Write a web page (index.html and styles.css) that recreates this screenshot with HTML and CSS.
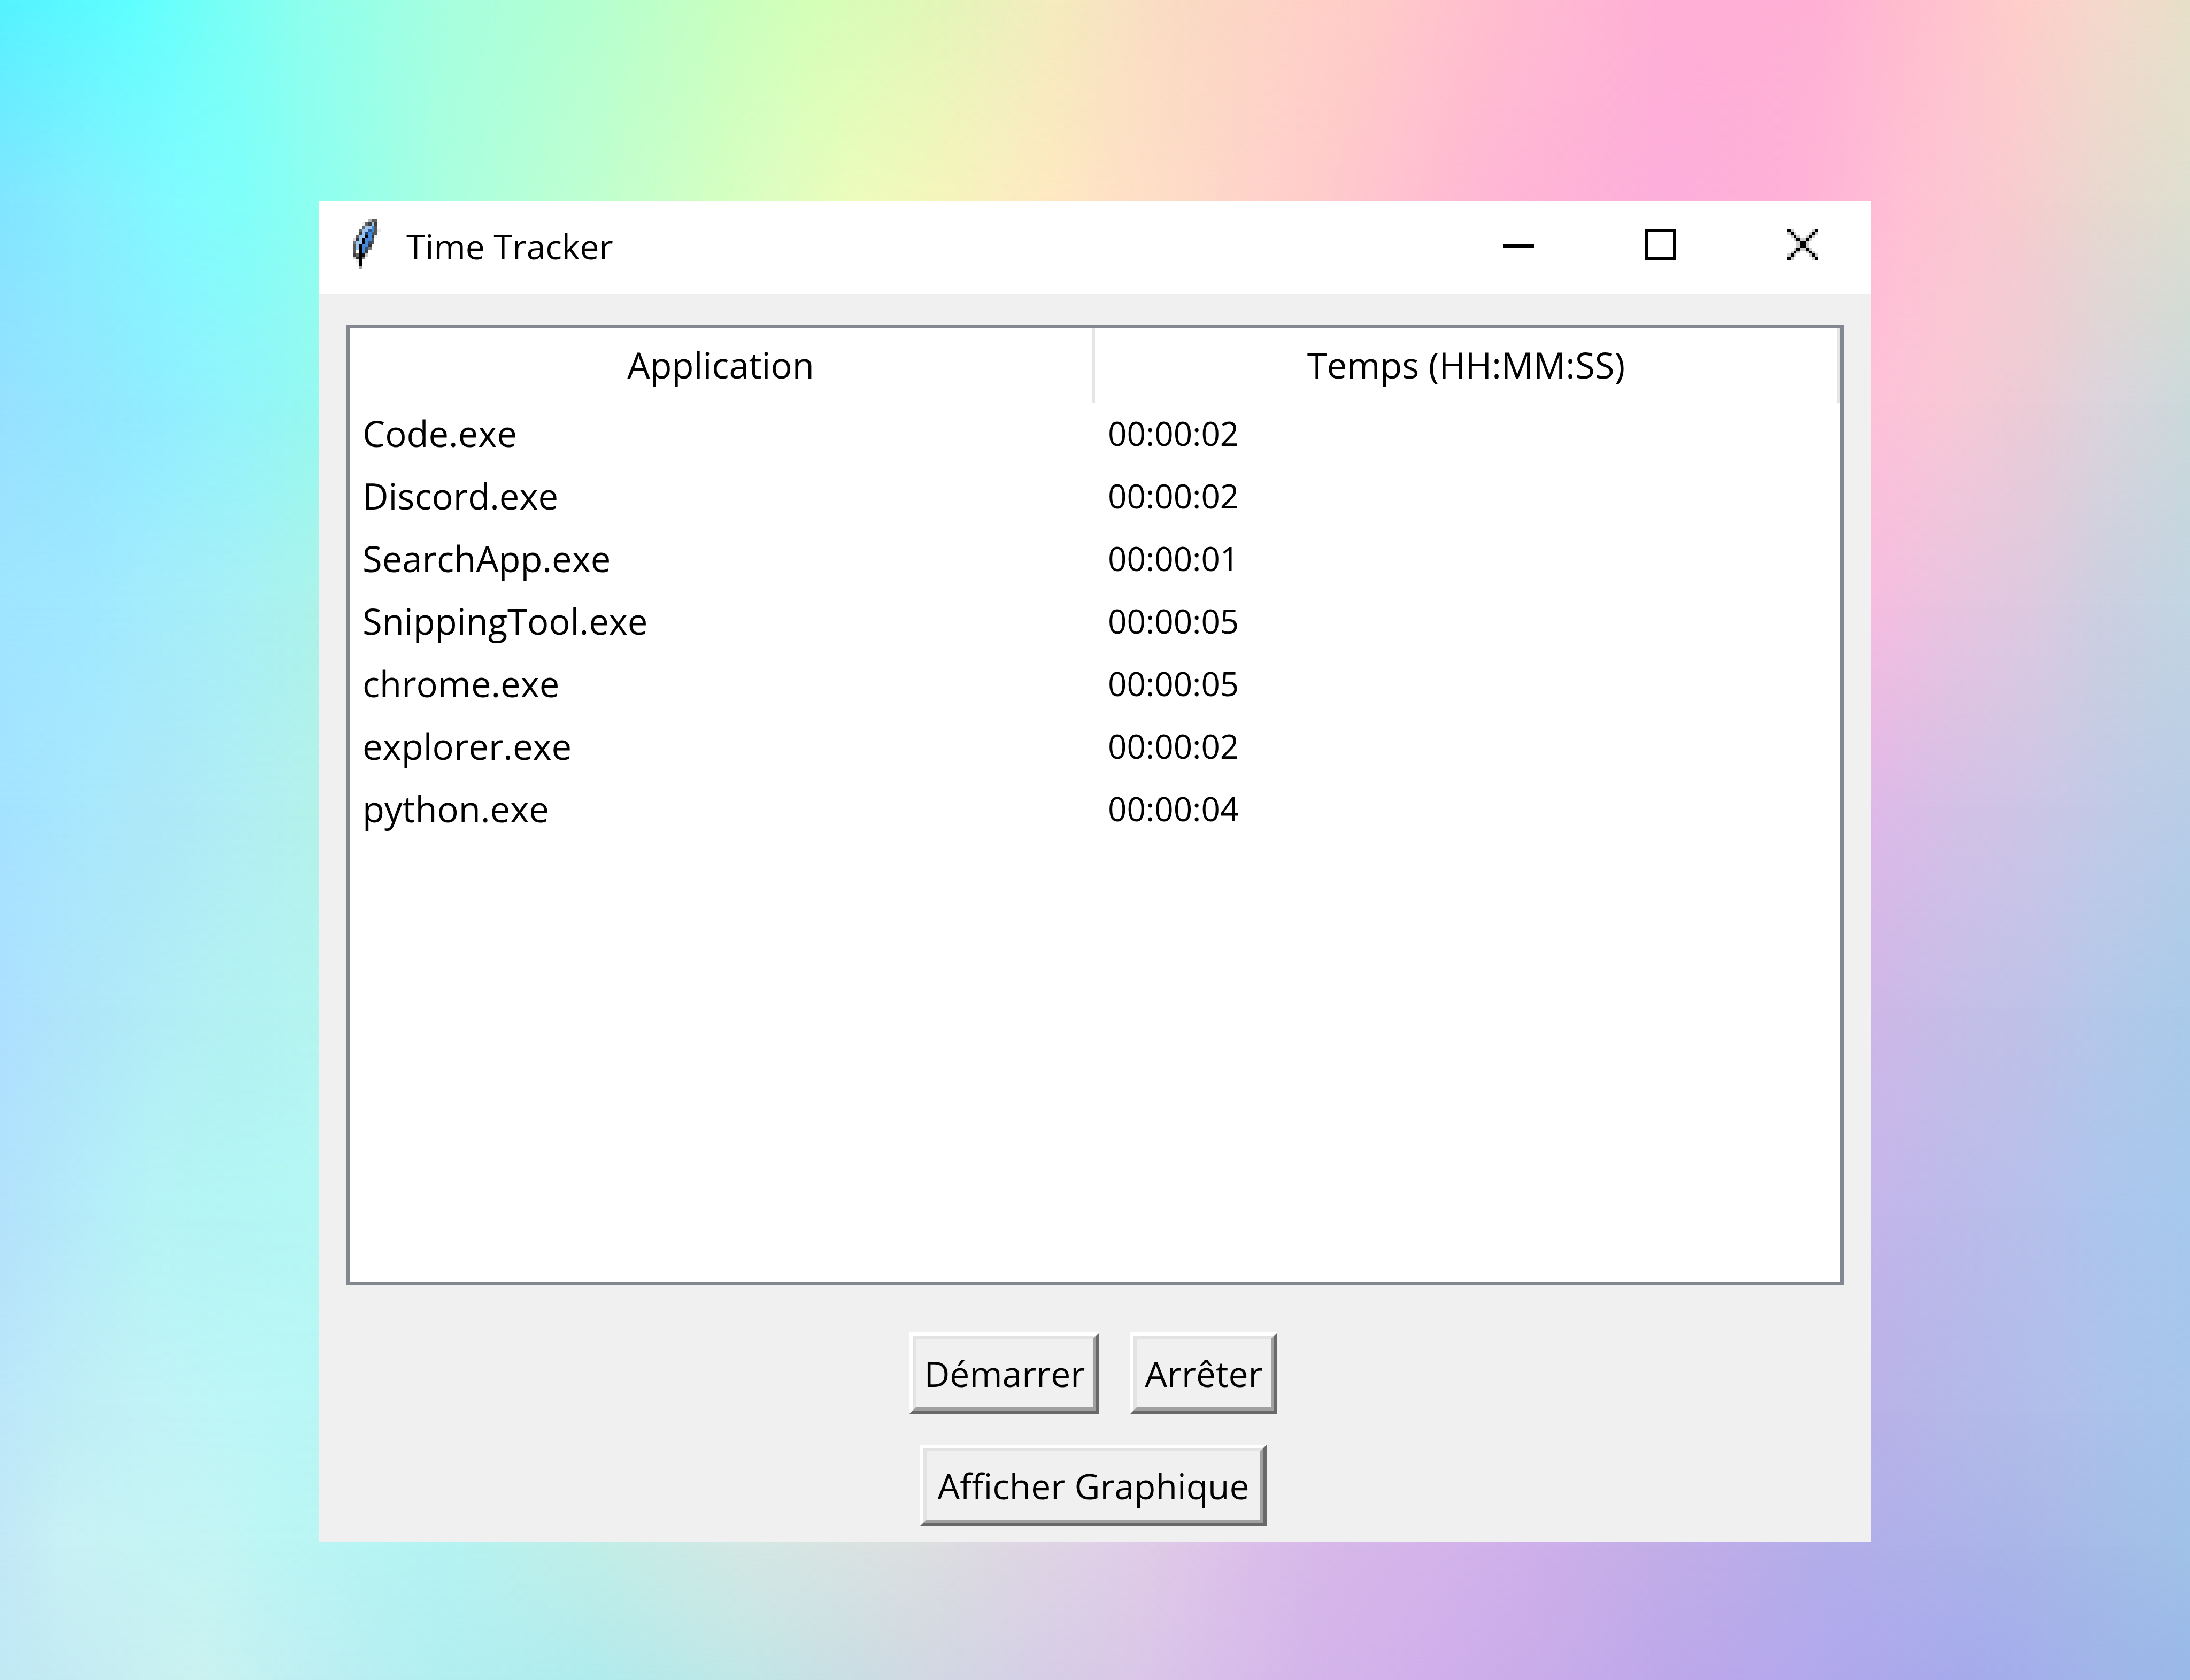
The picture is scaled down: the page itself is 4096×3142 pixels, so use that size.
FILE: index.html
```html
<!DOCTYPE html>
<html lang="fr">
<head>
<meta charset="utf-8">
<title>Time Tracker</title>
<link rel="stylesheet" href="styles.css">
</head>
<body>
<div class="wallpaper" aria-hidden="true">
  <div class="band band-0"></div>
  <div class="band band-12"></div>
  <div class="band band-24"></div>
  <div class="band band-36"></div>
  <div class="band band-48"></div>
  <div class="band band-60"></div>
  <div class="band band-72"></div>
  <div class="band band-84"></div>
  <div class="band band-92"></div>
  <div class="band band-100"></div>
</div>
<div class="desktop">
  <main class="window">
    <header class="titlebar">
      <svg class="feather" viewBox="0 0 9 16" shape-rendering="crispEdges" aria-hidden="true">
        <path fill="#9bc5f1" d="M6 1h1v1H6zM4 2h2v1H4zM3 3h2v1H3zM3 4h1v1H3zM2 5h2v1H2zM2 6h1v1H2zM1 7h2v1H1zM1 8h1v2H1z"/>
        <path fill="#4488dd" d="M6 2h1v2H6zM5 4h1v3H5zM4 6h1v3H4zM3 8h1v3H3z"/>
        <path fill="#000" d="M4 5h1v1H4zM3 6h1v2H3zM2 8h1v7H2z"/>
        <path fill="#575757" d="M6 0h1v1H6zM7 2h1v3H7zM6 6h1v2H6zM0 8h1v3H0z"/>
        <path fill="#656565" d="M7 0h1v1H7zM4 1h1v1H4zM3 2h1v1H3zM2 3h1v1H2zM1 5h1v1H1zM1 11h1v1H1z"/>
        <path fill="#3d3d3b" d="M5 1h1v1H5zM7 1h1v1H7zM2 4h1v1H2zM4 10h1v1H4zM0 11h1v1H0z"/>
        <path fill="#323232" d="M6 5h1v1H6zM1 6h1v1H1zM5 8h1v1H5zM1 12h1v1H1z"/>
        <path fill="#777" d="M0 7h1v1H0zM5 9h1v1H5zM3 12h1v1H3z"/>
        <path fill="#2d5a93" d="M5 3h1v1H5z"/>
        <path fill="#223f6b" d="M4 4h1v1H4z"/>
        <path fill="#425a80" d="M6 4h1v1H6z"/>
        <path fill="#364d6e" d="M5 7h1v1H5zM4 9h1v1H4z"/>
        <path fill="#111" d="M3 11h1v1H3z"/>
        <path fill="#a0a0a0" d="M2 15h1v1H2z"/>
        <path fill="#b3b3b3" d="M5 0h1v1H5z"/>
        <path fill="#cdcdcd" d="M4 11h1v1H4zM0 12h1v1H0z"/>
        <path fill="#dcdcdc" d="M0 6h1v1H0z"/>
        <path fill="#ececec" d="M3 1h1v1H3zM8 3h1v1H8zM7 5h1v1H7zM1 13h1v1H1z"/>
        <path fill="#f8f8f8" d="M1 4h1v1H1zM1 14h1v1H1z"/>
      </svg>
      <h1 class="title">Time Tracker</h1>
      <div class="caption-buttons">
        <button class="caption-button" type="button" aria-label="Réduire">
          <svg class="caption-icon" viewBox="0 0 10 10" shape-rendering="crispEdges"><path d="M0 5h10v1H0z"/></svg>
        </button>
        <button class="caption-button" type="button" aria-label="Agrandir">
          <svg class="caption-icon" viewBox="0 0 10 10" shape-rendering="crispEdges"><path fill-rule="evenodd" d="M0 0h10v10H0zM1 1v8h8V1z"/></svg>
        </button>
        <button class="caption-button" type="button" aria-label="Fermer">
          <svg class="caption-icon" viewBox="0 0 10 10" shape-rendering="crispEdges">
            <path fill="#ccc" d="M1 0h1v1h1v1h1v1h2V2h1V1h1V0h1v1h1v1H9v1H8v1H7v2h1v1h1v1h1v1H9v1H8V9H7V8H6V7H4v1H3v1H2v1H1V9H0V8h1V7h1V6h1V4H2V3H1V2H0V1h1z"/>
            <path d="M0 0h1v1H0zM1 1h1v1H1zM2 2h1v1H2zM3 3h1v1H3zM4 4h2v2H4zM6 6h1v1H6zM7 7h1v1H7zM8 8h1v1H8zM9 9h1v1H9zM9 0h1v1H9zM8 1h1v1H8zM7 2h1v1H7zM6 3h1v1H6zM3 6h1v1H3zM2 7h1v1H2zM1 8h1v1H1zM0 9h1v1H0z"/>
          </svg>
        </button>
      </div>
    </header>
    <section class="client">
      <div class="tree">
        <table class="tree-table">
          <thead>
            <tr><th scope="col">Application</th><th scope="col">Temps (HH:MM:SS)</th></tr>
          </thead>
          <tbody>
            <tr><td>Code.exe</td><td class="time">00:00:02</td></tr>
            <tr><td>Discord.exe</td><td class="time">00:00:02</td></tr>
            <tr><td>SearchApp.exe</td><td class="time">00:00:01</td></tr>
            <tr><td>SnippingTool.exe</td><td class="time">00:00:05</td></tr>
            <tr><td>chrome.exe</td><td class="time">00:00:05</td></tr>
            <tr><td>explorer.exe</td><td class="time">00:00:02</td></tr>
            <tr><td>python.exe</td><td class="time">00:00:04</td></tr>
          </tbody>
        </table>
      </div>
      <div class="actions">
        <div class="action-row">
          <button class="push-button" type="button"><span class="push-face">Démarrer</span></button>
          <button class="push-button" type="button"><span class="push-face">Arrêter</span></button>
        </div>
        <button class="push-button push-button-wide" type="button"><span class="push-face">Afficher Graphique</span></button>
      </div>
    </section>
  </main>
</div>
</body>
</html>
```
FILE: styles.css
```css
* {
  box-sizing: border-box;
}

body {
  margin: 0;
  display: grid;
  grid-template: minmax(100vh, auto) / minmax(0, 1fr);
  font-family: "Open Sans", "Noto Sans", sans-serif;
  font-size: 66px;
  color: #000;
}

.wallpaper,
.desktop {
  grid-area: 1 / 1;
}

/* Wallpaper: horizontal colour bands, each one fading in over the one above it */
.wallpaper {
  display: grid;
}

.band {
  grid-area: 1 / 1;
}

.band-0 {
  background: linear-gradient(to right, #54f3ff 0%, #5effff 6%, #70fff8 9%, #8effee 14%, #a5ffe0 20%, #b4ffd0 27%, #c8ffc0 33%, #d4ffb8 37%, #e0f8b8 42%, #f4ecbe 48%, #fadcc4 53%, #ffcdc8 62%, #ffbcd0 69%, #ffafd6 76%, #ffb0d5 83%, #ffbdcf 87%, #ffcdcb 92%, #f5d8cb 96%, #e8e0c8 100%);
}

.band-12 {
  background: linear-gradient(to right, #82e5ff 0%, #86efff 4%, #80fbff 8%, #80fffa 11%, #90ffee 15%, #a8ffe0 20%, #bfffd0 27%, #d4ffc2 33%, #ecfcbc 39%, #f5f5bc 43%, #fee8c2 48%, #fed8c8 55%, #ffc9cc 61%, #ffb6d4 68%, #fdaedb 76%, #ffb1d7 82%, #ffc0d4 87%, #f8cccf 92%, #e8d8cf 96%, #dedfd0 100%);
  mask-image: linear-gradient(to bottom, transparent 0%, #000 12%);
}

.band-24 {
  background: linear-gradient(to right, #96e1ff 0%, #93e7ff 4%, #90edff 7%, #92f5fa 11%, #96faee 15%, #ffc0d8 85%, #f8c8d6 89%, #eaccd6 93%, #dcd4dc 96%, #cbd9da 100%);
  mask-image: linear-gradient(to bottom, transparent 12%, #000 24%);
}

.band-36 {
  background: linear-gradient(to right, #a0e5ff 0%, #a0e8ff 4%, #a4ecfc 7%, #a8f0f5 11%, #acf3e8 15%, #f8bce0 85%, #e9c4e0 89%, #dccae0 93%, #cccfe0 96%, #c2d5e2 100%);
  mask-image: linear-gradient(to bottom, transparent 24%, #000 36%);
}

.band-48 {
  background: linear-gradient(to right, #a4e3ff 0%, #a8e8fd 4%, #ade8f8 7%, #b0eef4 11%, #b4f2e8 15%, #e0b8e8 85%, #d5c0e6 89%, #ccc6e6 93%, #c2cae6 96%, #b8cde6 100%);
  mask-image: linear-gradient(to bottom, transparent 36%, #000 48%);
}

.band-60 {
  background: linear-gradient(to right, #ade0ff 0%, #b0e6f9 4%, #b2ecf6 7%, #b2f2f2 11%, #b5f5f0 15%, #d0b6e8 85%, #c6bee8 89%, #bec2e8 93%, #b4c8ea 96%, #aacbea 100%);
  mask-image: linear-gradient(to bottom, transparent 48%, #000 60%);
}

.band-72 {
  background: linear-gradient(to right, #b2e2fc 0%, #b5ecf9 4%, #b5f4f6 7%, #b3f6f4 11%, #b4f8f4 15%, #c5b5ea 85%, #bcbae9 89%, #b5c0ea 93%, #adc5ec 96%, #a6c9ec 100%);
  mask-image: linear-gradient(to bottom, transparent 60%, #000 72%);
}

.band-84 {
  background: linear-gradient(to right, #bde7f9 0%, #c0eff6 4%, #c1f3f6 7%, #bdf6f6 11%, #b9f6f5 15%, #bab0e8 85%, #b4b8e9 89%, #b2bde9 93%, #acc2ea 96%, #a6c5ea 100%);
  mask-image: linear-gradient(to bottom, transparent 72%, #000 84%);
}

.band-92 {
  background: linear-gradient(to right, #c2e8f7 0%, #c8f1f4 3%, #c3f5f4 10%, #bcf6f4 12%, #b4f3f2 20%, #c0eee8 27%, #d4e8e4 34%, #dcdfe0 42%, #e0cce8 52%, #d8b8ea 60%, #d2b1ea 68%, #c2ade8 76%, #b2aeea 84%, #aab5e8 92%, #a0c2e8 100%);
  mask-image: linear-gradient(to bottom, transparent 84%, #000 92%);
}

.band-100 {
  background: linear-gradient(to right, #c0e8f4 0%, #caf1f0 9%, #beeff2 14%, #b2eef0 20%, #b0ebec 27%, #c0e6e6 34%, #d0d8e2 42%, #dac6e8 52%, #d4b4ea 60%, #d0aeea 66%, #bea8ea 76%, #aea8ec 85%, #a5aaec 90%, #a0b4e8 96%, #98b8e8 100%);
  mask-image: linear-gradient(to bottom, transparent 92%, #000 100%);
}

.desktop {
  display: flex;
  padding: 375px 596px 259px;
  z-index: 1;
}

.window {
  flex: 1;
  display: flex;
  flex-direction: column;
  background: #f0f0f0;
}

/* Title bar */
.titlebar {
  display: flex;
  align-items: center;
  height: 175px;
  padding-left: 64px;
  background: #fff;
}

.feather {
  width: 52px;
  height: 93px;
  margin-bottom: 12px;
}

.title {
  flex: 1;
  margin: 0;
  padding: 0 0 4px 48px;
  font-size: 64px;
  font-weight: 400;
}

.caption-buttons {
  display: flex;
  align-self: stretch;
  gap: 10px;
}

.caption-button {
  display: flex;
  justify-content: center;
  align-items: center;
  width: 256px;
  padding: 0 0 12px;
  border: 0;
  background: none;
}

.caption-icon {
  width: 58px;
  height: 58px;
}

/* Client area */
.client {
  flex: 1;
  display: flex;
  flex-direction: column;
  padding: 58px 52px 29px;
}

.tree {
  flex: 1;
  border: 6px solid #828790;
  background: #fff;
}

.tree-table {
  width: 100%;
  table-layout: fixed;
  border-collapse: separate;
  border-spacing: 0;
  font-size: 67px;
}

.tree-table th {
  height: 140px;
  padding: 0;
  border-right: 6px solid #e5e5e5;
  font-weight: 400;
  line-height: 136px;
  vertical-align: top;
}

.tree-table td {
  height: 117px;
  padding: 0 24px;
  line-height: 112px;
  vertical-align: top;
}

.tree-table .time {
  font-size: 62px;
}

/* Push buttons */
.actions {
  display: flex;
  flex-direction: column;
  align-items: center;
  gap: 58px;
  padding: 88px 6px 0 0;
}

.action-row {
  display: flex;
  gap: 58px;
}

.push-button {
  padding: 0;
  border: 6px solid;
  border-color: #fff #696969 #696969 #fff;
  background: #f0f0f0;
  color: #000;
  font: inherit;
}

.push-face {
  display: block;
  padding: 0 15px;
  border: 6px solid;
  border-color: #e3e3e3 #a0a0a0 #a0a0a0 #e3e3e3;
  line-height: 128px;
}

.push-button-wide .push-face {
  padding: 0 20px;
}
```
